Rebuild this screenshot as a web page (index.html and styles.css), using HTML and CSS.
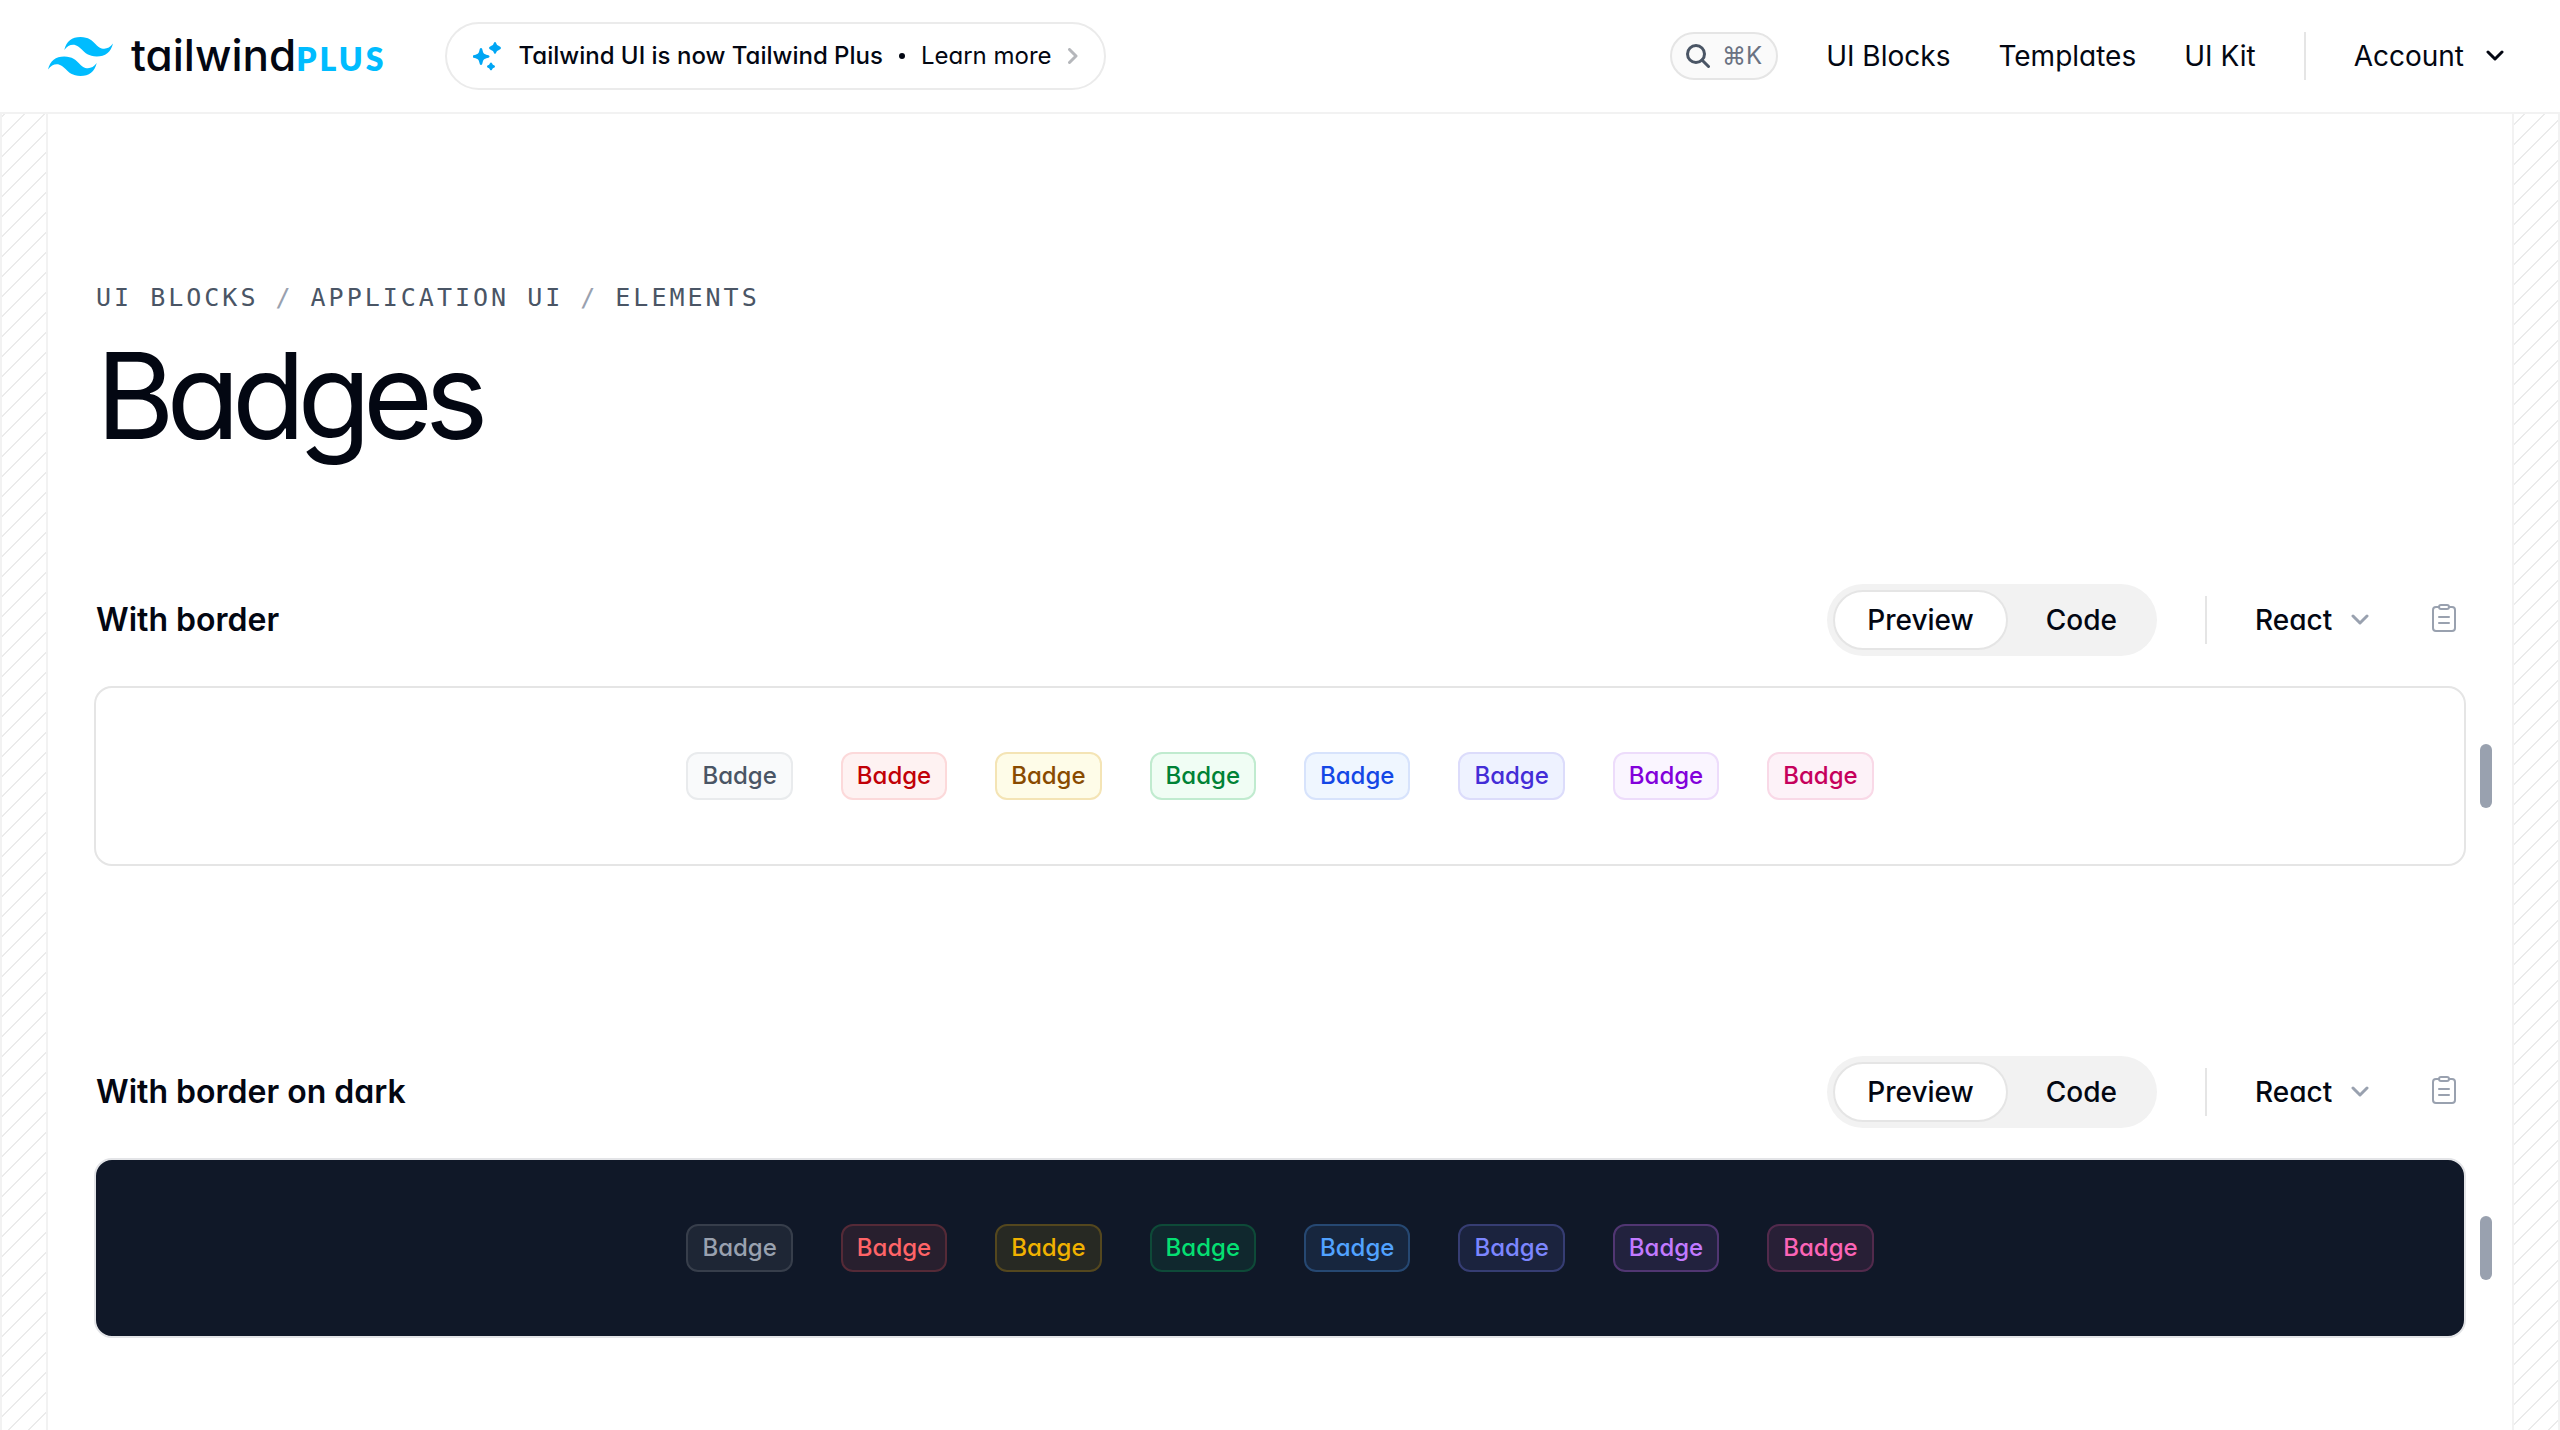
FILE: index.html
```html
<!DOCTYPE html>
<html lang="en">
<head>
<meta charset="utf-8">
<title>Badges - Tailwind Plus</title>
<link rel="stylesheet" href="styles.css">
</head>
<body>
<header class="site-header">
  <a class="logo" href="#" aria-label="Tailwind Plus home">
    <svg class="logo-mark" viewBox="0 0 54 32.4" aria-hidden="true"><path fill="currentColor" d="M27 0c-7.2 0-11.7 3.6-13.5 10.8 2.7-3.6 5.85-4.95 9.45-4.05 2.054.513 3.522 2.004 5.147 3.653C30.744 13.09 33.808 16.2 40.5 16.2c7.2 0 11.7-3.6 13.5-10.8-2.7 3.6-5.85 4.95-9.45 4.05-2.054-.513-3.522-2.004-5.147-3.653C36.756 3.11 33.692 0 27 0zM13.5 16.2C6.3 16.2 1.8 19.8 0 27c2.7-3.6 5.85-4.95 9.45-4.05 2.054.514 3.522 2.004 5.147 3.653C17.244 29.29 20.308 32.4 27 32.4c7.2 0 11.7-3.6 13.5-10.8-2.7 3.6-5.85 4.95-9.45 4.05-2.054-.513-3.522-2.004-5.147-3.653C23.256 19.31 20.192 16.2 13.5 16.2z"/></svg>
    <span class="logo-word">tailwind</span><span class="logo-plus">PLUS</span>
  </a>
  <a class="notice" href="#">
    <svg class="notice-icon" viewBox="0 0 28 30" aria-hidden="true"><path fill="currentColor" d="M8 7c1 0 1.200.7 1.500 2 .8 3.500 1.500 4.200 5 5 1.300.3 2 .5 2 1.500s-.7 1.200-2 1.500c-3.500.8-4.200 1.500-5 5-.3 1.300-.5 2-1.500 2s-1.200-.7-1.500-2c-.8-3.500-1.500-4.200-5-5-1.300-.3-2-.5-2-1.500s.7-1.200 2-1.500c3.500-.8 4.200-1.500 5-5 .3-1.300.5-2 1.500-2zM22 1c1 0 1.300 2 2.100 2.900C25 4.700 28 5.500 28 7s-3 2.300-3.900 3.100C23.300 11 23 13 22 13s-1.300-2-2.100-2.900C19 9.300 16 8.500 16 7s3-2.300 3.900-3.100C20.700 3 21 1 22 1zM18 21.500c1 0 1.100 1.300 1.700 1.900.6.6 2.300.9 2.300 2s-1.700 1.400-2.300 2c-.6.6-.7 1.900-1.700 1.900s-1.100-1.300-1.700-1.900c-.6-.6-2.300-.9-2.300-2s1.700-1.400 2.300-2c.6-.6.7-1.900 1.700-1.900z"/></svg>
    <span class="notice-title">Tailwind UI is now Tailwind Plus</span>
    <span class="notice-dot"></span>
    <span>Learn more</span>
    <svg class="notice-arrow" viewBox="0 0 10 16" aria-hidden="true"><path d="M1.500 1.500 8 8l-6.500 6.500"/></svg>
  </a>
  <nav class="main-nav">
    <button class="search" type="button" aria-label="Search">
      <svg class="search-icon" viewBox="0 0 24 24" aria-hidden="true"><circle cx="10" cy="10" r="8.500"/><path d="m16 16 6.500 6.500"/></svg>
      <span>⌘K</span>
    </button>
    <a href="#">UI Blocks</a>
    <a href="#">Templates</a>
    <a href="#">UI Kit</a>
    <span class="divider"></span>
    <button class="account" type="button">Account
      <svg class="account-arrow" viewBox="0 0 18 12" aria-hidden="true"><path d="m2 2 7 7 7-7"/></svg>
    </button>
  </nav>
</header>
<div class="page">
  <div class="gutter"></div>
  <main class="content">
    <nav class="crumbs" aria-label="Breadcrumb">
      <a href="#">UI Blocks</a><span class="slash">/</span><a href="#">Application UI</a><span class="slash">/</span><a href="#">Elements</a>
    </nav>
    <h1>Badges</h1>

    <section class="example">
      <div class="example-head">
        <h2>With border</h2>
        <div class="tabs">
          <button class="tab tab-active" type="button">Preview</button>
          <button class="tab" type="button">Code</button>
        </div>
        <span class="divider"></span>
        <label class="language">
          <select aria-label="Language"><option>React</option></select>
          <svg class="language-arrow" viewBox="0 0 18 12" aria-hidden="true"><path d="m2 2 7 7 7-7"/></svg>
        </label>
        <button class="copy" type="button" aria-label="Copy code">
          <svg viewBox="0 0 24 32" aria-hidden="true"><path d="M7 3H4a3 3 0 0 0-3 3v18a3 3 0 0 0 3 3h16a3 3 0 0 0 3-3V6a3 3 0 0 0-3-3h-3M7 13h10M7 19h10"/><rect x="7" y="1" width="10" height="4" rx="2"/></svg>
        </button>
      </div>
      <div class="stage">
        <div class="frame">
          <span class="badge gray">Badge</span>
          <span class="badge red">Badge</span>
          <span class="badge yellow">Badge</span>
          <span class="badge green">Badge</span>
          <span class="badge blue">Badge</span>
          <span class="badge indigo">Badge</span>
          <span class="badge purple">Badge</span>
          <span class="badge pink">Badge</span>
        </div>
        <div class="handle"></div>
      </div>
    </section>

    <section class="example">
      <div class="example-head">
        <h2>With border on dark</h2>
        <div class="tabs">
          <button class="tab tab-active" type="button">Preview</button>
          <button class="tab" type="button">Code</button>
        </div>
        <span class="divider"></span>
        <label class="language">
          <select aria-label="Language"><option>React</option></select>
          <svg class="language-arrow" viewBox="0 0 18 12" aria-hidden="true"><path d="m2 2 7 7 7-7"/></svg>
        </label>
        <button class="copy" type="button" aria-label="Copy code">
          <svg viewBox="0 0 24 32" aria-hidden="true"><path d="M7 3H4a3 3 0 0 0-3 3v18a3 3 0 0 0 3 3h16a3 3 0 0 0 3-3V6a3 3 0 0 0-3-3h-3M7 13h10M7 19h10"/><rect x="7" y="1" width="10" height="4" rx="2"/></svg>
        </button>
      </div>
      <div class="stage">
        <div class="frame frame-dark">
          <span class="badge gray">Badge</span>
          <span class="badge red">Badge</span>
          <span class="badge yellow">Badge</span>
          <span class="badge green">Badge</span>
          <span class="badge blue">Badge</span>
          <span class="badge indigo">Badge</span>
          <span class="badge purple">Badge</span>
          <span class="badge pink">Badge</span>
        </div>
        <div class="handle"></div>
      </div>
    </section>
  </main>
  <div class="gutter"></div>
</div>
</body>
</html>
```
FILE: styles.css
```css
*, *::before, *::after { box-sizing: border-box; }

:root {
  --ink: #030712;
  --line: #e5e5e5;
  --line-soft: #f2f2f2;
}

body {
  margin: 0;
  min-height: 100vh;
  display: flex;
  flex-direction: column;
  background: #fff;
  color: var(--ink);
  font-family: Inter, "Liberation Sans", sans-serif;
  font-feature-settings: "cv11";
  font-size: 28px;
  line-height: 48px;
}

a { color: inherit; text-decoration: none; }

button, select {
  margin: 0;
  padding: 0;
  border: 0;
  background: none;
  color: inherit;
  font: inherit;
  font-feature-settings: inherit;
}

svg { display: block; flex: none; fill: none; stroke-linecap: round; stroke-linejoin: round; }

.divider { width: 2px; height: 48px; background: var(--line); }

/* Header */
.site-header {
  display: flex;
  align-items: center;
  height: 114px;
  padding: 0 56px 0 48px;
  border-bottom: 2px solid var(--line-soft);
}

.logo { display: flex; align-items: baseline; margin-right: 58px; }
.logo-mark { width: 65px; height: 39px; margin-right: 18px; align-self: center; color: #00bcff; }
.logo-word { padding-top: 2px; font-size: 44px; font-weight: 500; }
.logo-plus { font-size: 32px; font-weight: 800; font-family: Lato, sans-serif; letter-spacing: 3px; color: #00bcff; }

.notice {
  display: flex;
  align-items: center;
  height: 68px;
  padding: 0 26px;
  border: 2px solid #ebebeb;
  border-radius: 34px;
  font-size: 24px;
}
.notice-icon { width: 28px; height: 30px; margin-right: 18px; color: #00a6f4; }
.notice-title { font-weight: 500; }
.notice-dot { width: 6px; height: 6px; margin: 0 16px; border-radius: 50%; background: var(--ink); }
.notice-arrow { width: 10px; height: 16px; margin-left: 16px; stroke: #b5b7bb; stroke-width: 3; }

.main-nav { display: flex; align-items: center; gap: 48px; margin-left: auto; }
.search {
  display: flex;
  align-items: center;
  gap: 12px;
  height: 48px;
  padding: 0 14px;
  border: 2px solid var(--line);
  border-radius: 24px;
  background: #fafafa;
  color: #6a7282;
  font-size: 24px;
}
.search-icon { width: 24px; height: 24px; stroke: #4a5565; stroke-width: 3; }
.account { display: flex; align-items: center; gap: 22px; }
.account-arrow { width: 18px; height: 12px; stroke: var(--ink); stroke-width: 3; }

/* Page columns */
.page { flex: 1; display: grid; grid-template-columns: 48px minmax(0, 1fr) 48px; }
.gutter {
  border: solid var(--line-soft);
  border-width: 0 2px;
  background-image: repeating-linear-gradient(315deg, #ebebeb 0, #ebebeb 2px, transparent 0, transparent 50%);
  background-size: 20px 20px;
  background-attachment: fixed;
}
.content { padding: 160px 48px 0; }

.crumbs {
  display: flex;
  gap: 17px;
  font-family: "DejaVu Sans Mono", monospace;
  font-size: 25px;
  letter-spacing: 3px;
  text-transform: uppercase;
  color: #4a5565;
}
.slash { color: #99a1af; }

h1 {
  margin: 10px 0 0;
  font-size: 120px;
  font-weight: 400;
  line-height: 128px;
  letter-spacing: -8px;
}

/* Examples */
.example { margin-top: 124px; }
.example + .example { margin-top: 190px; }
.example-head { display: flex; align-items: center; gap: 48px; }
h2 { flex: 1; margin: 0; font-size: 32px; font-weight: 600; }

.tabs { display: flex; gap: 4px; padding: 6px; border-radius: 36px; background: #f2f2f2; }
.tab { height: 60px; padding: 0 34px; font-weight: 500; }
.tab-active { padding: 0 32px; border: 2px solid var(--line); border-radius: 30px; background: #fff; }

.language { display: flex; align-items: center; gap: 18px; font-weight: 500; }
.language select { appearance: none; }
.language-arrow { width: 18px; height: 12px; stroke: #99a1af; stroke-width: 3; }
.copy { padding: 0 8px 0 15px; }
.copy svg { width: 24px; height: 32px; stroke: #99a1af; stroke-width: 2; }

.stage { position: relative; margin: 30px -2px 0; }
.frame {
  display: flex;
  justify-content: center;
  gap: 48px;
  padding: 64px;
  border: 2px solid var(--line);
  border-radius: 18px;
}
.frame-dark { border-color: #e3e4e7; background: #101828; }
.handle {
  position: absolute;
  right: -26px;
  top: 50%;
  width: 12px;
  height: 64px;
  margin-top: -32px;
  border-radius: 6px;
  background: #99a1af;
}

.badge {
  padding: 6px 14px;
  border: 2px solid;
  border-radius: 12px;
  font-size: 24px;
  font-weight: 500;
  line-height: 32px;
}
.gray { color: #4a5565; background: #f9fafb; border-color: #e9ebed; }
.red { color: #c10007; background: #fef2f2; border-color: #fcd9da; }
.yellow { color: #894b00; background: #fefce8; border-color: #f4e4b5; }
.green { color: #008236; background: #f0fdf4; border-color: #c0ebcf; }
.blue { color: #1447e6; background: #eff6ff; border-color: #d7e3fc; }
.indigo { color: #432dd7; background: #eef2ff; border-color: #dcdcfb; }
.purple { color: #8200db; background: #faf5ff; border-color: #eddcfb; }
.pink { color: #c6005c; background: #fdf2f8; border-color: #f9d9e7; }

.frame-dark .gray { color: #99a1af; background: #1e2635; border-color: #373e4b; }
.frame-dark .red { color: #ff6467; background: #281f2e; border-color: #552a37; }
.frame-dark .yellow { color: #f0b100; background: #272923; border-color: #54471e; }
.frame-dark .green { color: #05df72; background: #10282e; border-color: #0e4a38; }
.frame-dark .blue { color: #51a2ff; background: #17263e; border-color: #264872; }
.frame-dark .indigo { color: #7c86ff; background: #1b233e; border-color: #363d73; }
.frame-dark .purple { color: #c27aff; background: #22223e; border-color: #513672; }
.frame-dark .pink { color: #fb64b6; background: #281f36; border-color: #522a4c; }
```
